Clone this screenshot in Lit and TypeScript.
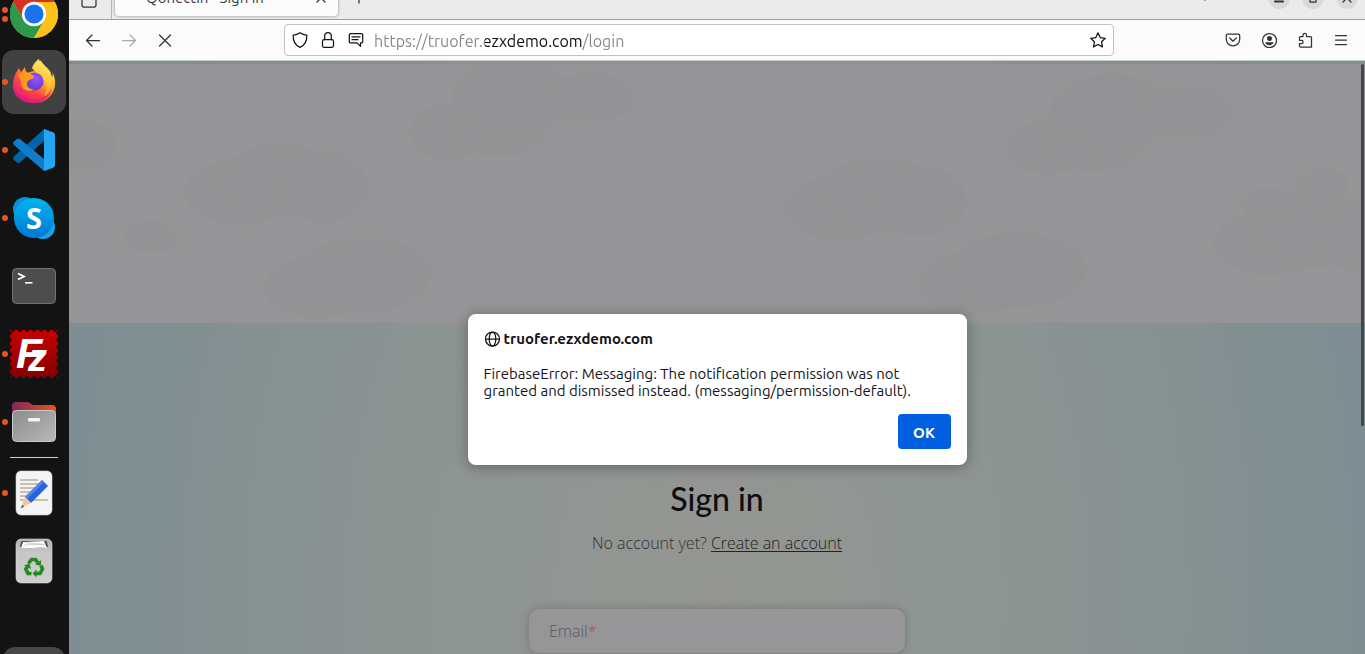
import { LitElement, html, svg, css } from "lit";
import { customElement, property } from "lit/decorators.js";

/* ---------- dock ---------- */

const chrome = html`<svg class="art" viewBox="0 0 48 48" aria-hidden="true">
  <circle cx="24" cy="24" r="24" fill="#fbc116"/>
  <path d="M24 12H44.8A24 24 0 0 0 3.2 12L13.6 30Z" fill="#d93025"/>
  <path d="M3.2 12A24 24 0 0 0 24 48L34.4 30 24 24 13.6 30Z" fill="#2d9a4b"/>
  <path d="M44.8 12A24 24 0 0 1 24 48L34.4 30A12 12 0 0 0 24 12Z" fill="#fbc116"/>
  <circle cx="24" cy="24" r="12.2" fill="#fff"/><circle cx="24" cy="24" r="9.6" fill="#1a73e8"/>
</svg>`;

const firefox = html`<svg class="art" viewBox="0 0 48 48" aria-hidden="true">
  <defs>
    <linearGradient id="ff1" x1=".85" y1=".1" x2=".2" y2=".95">
      <stop offset="0" stop-color="#fff44f"/><stop offset=".35" stop-color="#ffae27"/>
      <stop offset=".65" stop-color="#ff4a3c"/><stop offset="1" stop-color="#e31587"/>
    </linearGradient>
    <linearGradient id="ff2" x1=".7" y1="0" x2=".4" y2="1">
      <stop offset="0" stop-color="#fff36b"/><stop offset="1" stop-color="#ff9a1e"/>
    </linearGradient>
    <radialGradient id="ff3" cx=".6" cy=".3" r=".8">
      <stop offset="0" stop-color="#a24fff"/><stop offset="1" stop-color="#4b3fc4"/>
    </radialGradient>
  </defs>
  <path d="M4 20C5 15 8 12 9 10c1 2 1 3 2 4 2-2 3-4 4-5 0 3 1 5 3 6 3-2 7-2 10-1 0-5 1-9 3-12 1 4 5 6 8 10 2 2 2 4 3 7 1-1 1-3 0-5 4 6 4 14 1 20-4 8-11 11-19 11C12 45 4 39 3 29c0-3 0-6 1-9Z" fill="url(#ff1)"/>
  <path d="M22 10c1-4 4-7 7-9 1 5 6 7 9 12 6 10 3 20-3 25 2-6 2-12-1-16-3-5-9-7-12-12Z" fill="url(#ff2)"/>
  <circle cx="24.500" cy="23.500" r="9" fill="url(#ff3)"/>
  <path d="M8 18c3-4 9-5 13-2 1 1 3 1 3 3 0 2-4 2-6 4-3 4 1 9 6 8-5 4-13 1-13-6 0-3-1-5-3-7Z" fill="#ff9a1e"/>
  <path d="M5 31c4 8 13 11 21 10 7-1 13-4 16-10-2 8-10 14-18 14C14 45 7 40 5 31Z" fill="#e2177f" opacity=".65"/>
</svg>`;

const vscode = html`<svg class="art" viewBox="0 0 48 48" aria-hidden="true">
  <path d="M34 3 44 7V14L34 15 10 36.500Q8.500 37.500 7 36.500L3.500 33.500Q2.500 32 4 30.500Z" fill="#0065a9"/>
  <path d="M34 45 44 41V34L34 33 10 13Q8.500 12 7 13L3.500 16Q2.500 17.500 4 19Z" fill="#0f7dcb"/>
  <path d="M34 3 43.500 6.500Q45 7.200 45 9V39Q45 40.800 43.500 41.500L34 45Z" fill="#24a6f2"/>
</svg>`;

const skype = html`<svg class="art" viewBox="0 0 48 48" aria-hidden="true">
  <defs><linearGradient id="sk" x1="0" y1="0" x2="0" y2="1">
    <stop offset="0" stop-color="#00b7f0"/><stop offset="1" stop-color="#0078d4"/></linearGradient></defs>
  <circle cx="15" cy="15" r="12" fill="#0a8fdc"/><circle cx="33" cy="33" r="12" fill="#1aa3ec"/>
  <circle cx="24" cy="24" r="20" fill="url(#sk)"/>
  <text class="skype-letter" x="24" y="35" text-anchor="middle">S</text>
</svg>`;

const terminal = html`<svg class="art" viewBox="0 0 48 48" aria-hidden="true">
  <rect x="2.500" y="6.500" width="43" height="35" rx="4" fill="#4d4d4d" stroke="#737373"/>
  <path d="M8 11.500 14 14.500 8 17.500" fill="none" stroke="#fff" stroke-width="1.800"/>
  <path d="M15 20.800h7.500" stroke="#fff" stroke-width="1.600"/>
</svg>`;

const notches = [3, 10, 17, 24, 31, 38, 45];
const filezilla = html`<svg class="art" viewBox="0 0 48 48" aria-hidden="true">
  <defs><linearGradient id="fz" x1="0" y1="0" x2="0" y2="1">
    <stop offset="0" stop-color="#c80000"/><stop offset="1" stop-color="#860000"/></linearGradient></defs>
  <rect width="48" height="48" fill="url(#fz)"/>
  ${notches.map((n) => svg`<circle cx=${n} cy="0" r="1.900" fill="#131313"/><circle cx=${n} cy="48" r="1.900" fill="#131313"/>
    <circle cx="0" cy=${n} r="1.900" fill="#131313"/><circle cx="48" cy=${n} r="1.900" fill="#131313"/>`)}
  <text class="fz-f" x="6" y="38">F</text><text class="fz-z" x="18" y="41">z</text>
</svg>`;

const files = html`<svg class="art" viewBox="0 0 48 48" aria-hidden="true">
  <defs>
    <linearGradient id="fo" x1="0" y1="0" x2="1" y2="0"><stop offset="0" stop-color="#7c2a5c"/><stop offset="1" stop-color="#e95420"/></linearGradient>
    <linearGradient id="fg" x1="0" y1="0" x2="1" y2="1"><stop offset="0" stop-color="#8c8c8c"/><stop offset="1" stop-color="#b8b8b8"/></linearGradient>
  </defs>
  <path d="M2 8Q2 4 6 4H17Q19 4 20.500 5.500T24 7H42Q46 7 46 11V30H2Z" fill="url(#fo)"/>
  <rect x="2.500" y="12.500" width="43" height="31" rx="4" fill="url(#fg)" stroke="#c9c9c9"/>
  <rect x="18" y="20" width="12" height="3.500" rx="1.200" fill="#f4f4f4"/>
</svg>`;

const editor = html`<svg class="art" viewBox="0 0 48 48" aria-hidden="true">
  <rect x="6" y="2" width="36" height="44" rx="5" fill="#f4f4f4" stroke="#d5d5d5" stroke-width=".6"/>
  <path d="M10 11h18M10 15h20M10 19h17M10 23h13M10 27h10M10 31h28" stroke="#c3c1b2" stroke-width="2"/>
  <path d="M32 11 38 17 21 34 15 28Z" fill="#2b63dd"/><path d="M32 11 34 13 17 30 15 28Z" fill="#4f86f2"/>
  <path d="M15 28 21 34 11 39Z" fill="#f7c595"/><path d="M12.500 36 14 37.500 10.500 39.500Z" fill="#3a3a3a"/>
</svg>`;

const trash = html`<svg class="art" viewBox="0 0 48 48" aria-hidden="true">
  <defs><linearGradient id="tr" x1="0" y1="0" x2="0" y2="1">
    <stop offset="0" stop-color="#b0b0b0"/><stop offset=".3" stop-color="#c6c6c6"/><stop offset="1" stop-color="#cfcfcf"/></linearGradient></defs>
  <rect x="6" y="2" width="36" height="44" rx="5" fill="url(#tr)" stroke="#dadada" stroke-width=".6"/>
  <path d="M10 10 11 5Q11.200 4 12.500 4H35.500Q36.800 4 37 5L38 10Z" fill="#4c4c4c"/>
  <path d="M11 11 13 5 34 4 37 11 30 10 24 11Z" fill="#fff"/><path d="M14 8 32 7M15 5.500 35 8" stroke="#bbb" stroke-width=".7"/>
  <g fill="none" stroke="#26891f" stroke-width="3.600">
    <path d="M18.500 26.500 21.500 22.500H25.500L28 26"/><path d="M31 28.500 32.500 32 30 36.500H25.500"/><path d="M21.500 36.500H18L15.800 32 18 29"/>
  </g>
  <path d="M25 27.500 30.800 28.800 31.200 23Z M26.500 32.500 22.500 36.500 26.500 40.500Z M14 28.500 19.500 26.500 21 32Z" fill="#26891f"/>
</svg>`;

@customElement("app-dock")
class AppDock extends LitElement {
  static styles = css`
    :host { display: flex; flex-direction: column; justify-content: space-between; overflow: hidden; background: #131313; }
    .apps, .pinned { display: flex; flex-direction: column; gap: 4px; }
    .apps { margin-top: -18px; }
    .pinned { margin-top: 3px; }
    .item { position: relative; display: grid; place-items: center; width: 64px; height: 64px; margin: 0 2px; padding: 0; border: 0; border-radius: 12px; background: none; }
    .item.active { background: #414141; }
    .art { display: block; width: 48px; height: 48px; }
    .dots { position: absolute; left: 0; top: 0; height: 100%; display: flex; flex-direction: column; justify-content: center; gap: 3px; }
    .dot { width: 6px; height: 6px; border-radius: 50%; background: #e95420; }
    .rule { height: 1px; margin: 3px 11px 3px 10px; border: 0; background: #d0d0d0; }
    .grid { flex: none; width: 62px; height: 64px; margin: 0 3px -57px; border: 0; border-radius: 12px; background: #474747; }
    .skype-letter { font: 700 29px "Noto Sans", sans-serif; fill: #fff; }
    .fz-f { font: italic 700 43px "Liberation Sans", sans-serif; fill: #fff; }
    .fz-z { font: italic 700 38px "Liberation Sans", sans-serif; fill: #fff; }
  `;
  render() {
    const item = (name: string, art: unknown, dots: number, active = false) => html`
      <button class="item ${active ? "active" : ""}" aria-label=${name}>
        ${art}<span class="dots">${Array.from({ length: dots }, () => html`<span class="dot"></span>`)}</span>
      </button>`;
    return html`
      <div>
        <nav class="apps">
          ${item("Google Chrome", chrome, 2)}${item("Firefox", firefox, 1, true)}${item("Visual Studio Code", vscode, 1)}
          ${item("Skype", skype, 1)}${item("Terminal", terminal, 0)}${item("FileZilla", filezilla, 1)}${item("Files", files, 1)}
        </nav>
        <hr class="rule">
        <nav class="pinned">${item("Text Editor", editor, 1)}${item("Trash", trash, 0)}</nav>
      </div>
      <button class="grid" aria-label="Show applications"></button>`;
  }
}

/* ---------- browser icons, all on a 16 unit grid ---------- */

const glyph = (body: unknown) => html`<svg class="glyph" viewBox="0 0 16 16" aria-hidden="true">${body}</svg>`;
const icons = {
  view: glyph(svg`<path d="M1 1v12q0 2 2 2h10q2 0 2-2V1"/>`),
  close: glyph(svg`<path d="M4 4l8 8M12 4l-8 8"/>`),
  plus: glyph(svg`<path d="M8 3v10M3 8h10"/>`),
  caret: glyph(svg`<path d="M4 6l4 4 4-4"/>`),
  minimize: glyph(svg`<path d="M4 11.500h8" stroke-width="2"/>`),
  maximize: glyph(svg`<rect x="5" y="5" width="6" height="7"/>`),
  back: glyph(svg`<path d="M14.500 8.500H1.500M7 3 1.500 8.500 7 14"/>`),
  forward: glyph(svg`<path d="M1.500 8.500h13M9 3 14.500 8.500 9 14"/>`),
  stop: glyph(svg`<path d="M2.500 3l11 11M13.500 3l-11 11"/>`),
  shield: glyph(svg`<path d="M8 .8C6 2.300 3.700 3 1.200 3.200 1 9 3 13.200 8 15.300 13 13.200 15 9 14.800 3.200 12.300 3 10 2.300 8 .8Z"/>`),
  lock: glyph(svg`<rect x="2.500" y="7.500" width="11" height="7.800" rx="1.500"/><path d="M4.700 7.500V4a3.300 3.300 0 0 1 6.600 0v3.500"/>`),
  note: glyph(svg`<path d="M2.500 1.500h11q1.200 0 1.200 1.200v7q0 1.200-1.200 1.200h-1v3.500L9 10.900H2.500q-1.200 0-1.200-1.200v-7q0-1.200 1.200-1.200ZM4 4.800h8M4 7.500h6"/>`),
  star: glyph(svg`<path d="m8 .8 2.200 4.800 5.100.7-3.700 3.500.9 5.100L8 12.500l-4.500 2.400.9-5.100L.7 6.300l5.100-.7Z"/>`),
  pocket: glyph(svg`<path d="M2.700 2.200h10.600q1.400 0 1.400 1.400v3.600a6.700 6.700 0 0 1-13.400 0V3.600q0-1.400 1.400-1.400ZM4.700 6 8 9.200 11.300 6"/>`),
  account: glyph(svg`<circle cx="8.500" cy="8.500" r="7"/><circle cx="8.500" cy="6.500" r="2.500" class="solid"/><path class="solid" d="M4.200 10.300h8.600Q12 13.300 8.500 13.300T4.200 10.300Z"/>`),
  extension: glyph(svg`<path d="M6 4.500V3a1.700 1.700 0 0 1 3.500 0v1.500h4q1 0 1 1V15H3.500q-1 0-1-1v-2.500h2a1.500 1.500 0 0 0 0-3.200h-2V5.500q0-1 1-1Z"/>`),
  menu: glyph(svg`<path d="M2.500 3.500h11M2.500 8h11M2.500 12.500h11"/>`),
  globe: glyph(svg`<circle cx="7.500" cy="8" r="7"/><ellipse cx="7.500" cy="8" rx="3.300" ry="7"/><path d="M.5 8h14"/>`),
};

const glyphStyles = css`
  .glyph { display: block; width: 16px; height: 16px; fill: none; stroke: currentColor; stroke-width: 1.25; stroke-linejoin: round; stroke-linecap: round; }
  .solid { fill: currentColor; stroke: none; }
`;

@customElement("browser-chrome")
class BrowserChrome extends LitElement {
  static styles = [glyphStyles, css`
    :host { display: block; font-family: Ubuntu, "Noto Sans", sans-serif; color: #333337; }
    button { display: grid; place-items: center; padding: 0; border: 0; background: none; color: inherit; }
    .strip { display: flex; align-items: flex-end; height: 19px; overflow: hidden; background: #ebebeb; border-bottom: 1px solid #a0a0a2; }
    .view { flex: none; width: 43px; height: 32px; padding: 0 3px 6px 0; border-right: 1px solid #b5b5b7; }
    .tab { display: flex; flex: none; align-items: center; box-sizing: border-box; width: 223px; height: 36px; margin: 0 3px 3px; padding: 0 8px 0 31px; border-radius: 4px; background: #fcfcfc; box-shadow: 0 0 3px rgba(0, 0, 0, .45); }
    .title { flex: 1; font-size: 15px; line-height: 20px; white-space: nowrap; color: #3b3b40; }
    .tab-close { width: 18px; height: 18px; }
    .add { width: 36px; height: 36px; margin-bottom: 3px; }
    .space { flex: 1; }
    .list { width: 36px; height: 36px; margin-bottom: 3px; }
    .controls { display: flex; gap: 12px; margin: 0 7px 10px 45px; }
    .control { width: 22px; height: 22px; border-radius: 50%; background: #d9d9d9; }
    .bar { display: flex; align-items: center; height: 40px; background: #fbfbfb; border-bottom: 1px solid #c8c8c9; }
    .nav { display: flex; flex: none; width: 209px; padding-left: 6px; }
    .nav button, .tools button { width: 36px; height: 32px; }
    .off { opacity: .4; }
    .address { display: flex; flex: 1; align-items: center; box-sizing: border-box; height: 32px; padding: 0 7px 0 1px; border: 1px solid #c0c0c1; border-radius: 4px; background: #fff; color: #15141a; }
    .address button { width: 28px; height: 28px; }
    .address .fav { width: 16px; }
    .url { flex: 1; min-width: 0; padding: 2px 0 0 4px; border: 0; outline: 0; font: 16px/20px Ubuntu, "Noto Sans", sans-serif; color: transparent;
      background: linear-gradient(90deg, #85858a 115px, #0c0c0d 115px, #0c0c0d 212px, #85858a 212px) text; -webkit-background-clip: text; }
    .tools { display: flex; flex: none; margin: 0 6px 0 101px; }
  `];
  render() {
    return html`
      <div class="strip">
        <button class="view" aria-label="Firefox View">${icons.view}</button>
        <div class="tab"><span class="title">Qonectin - Sign in</span><button class="tab-close" aria-label="Close tab">${icons.close}</button></div>
        <button class="add" aria-label="New tab">${icons.plus}</button>
        <span class="space"></span>
        <button class="list" aria-label="List all tabs">${icons.caret}</button>
        <div class="controls">
          <button class="control" aria-label="Minimize">${icons.minimize}</button>
          <button class="control" aria-label="Maximize">${icons.maximize}</button>
          <button class="control" aria-label="Close">${icons.close}</button>
        </div>
      </div>
      <div class="bar">
        <div class="nav">
          <button aria-label="Back">${icons.back}</button>
          <button class="off" aria-label="Forward">${icons.forward}</button>
          <button aria-label="Stop">${icons.stop}</button>
        </div>
        <div class="address">
          <button aria-label="Tracking protection">${icons.shield}</button>
          <button aria-label="Connection secure">${icons.lock}</button>
          <button aria-label="Notification request">${icons.note}</button>
          <input class="url" aria-label="Address" value="https://truofer.ezxdemo.com/login" spellcheck="false">
          <button class="fav" aria-label="Bookmark this page">${icons.star}</button>
        </div>
        <div class="tools">
          <button aria-label="Save to Pocket">${icons.pocket}</button>
          <button aria-label="Account">${icons.account}</button>
          <button aria-label="Extensions">${icons.extension}</button>
          <button aria-label="Menu">${icons.menu}</button>
        </div>
      </div>`;
  }
}

/* ---------- page ---------- */

/* cx, cy, rx, ry of every cloud lobe */
const lobes = [
  [10, 81, 38, 25], [169, 128, 54, 33], [212, 117, 62, 37], [255, 123, 44, 35], [82, 173, 26, 16],
  [249, 223, 54, 31], [294, 211, 68, 37], [380, 68, 40, 27], [430, 62, 48, 31], [443, 32, 61, 38], [523, 33, 42, 25],
  [770, 144, 56, 32], [811, 131, 60, 37], [852, 137, 45, 35], [904, 219, 54, 32], [948, 206, 69, 37],
  [979, 83, 41, 27], [1026, 77, 49, 30], [1043, 48, 62, 38], [1121, 48, 42, 25],
  [1201, 179, 56, 32], [1250, 165, 62, 38], [1290, 172, 42, 35], [1254, 120, 26, 16], [1197, 139, 26, 16],
];

@customElement("sign-in-page")
class SignInPage extends LitElement {
  static styles = css`
    :host { display: block; min-height: 0; overflow: hidden; padding-top: 3px; color: #0e0e10;
      background: radial-gradient(ellipse 660px 1000px at 50% 540px, #949590, #919693 20%, #8c9492 48%, #869191 72%, #818f92 88%, #7f8e92); }
    .sky { height: 259px; overflow: hidden; background: #959496; }
    .clouds { display: block; width: 100%; height: 259px; fill: #939294; }
    .form { display: flex; flex-direction: column; align-items: center; padding-top: 156px; }
    .heading { margin: 0; font: 500 32px/40px Lato, sans-serif; }
    .hint { margin: 14px 0 0; font: 300 16px/20px "Open Sans", sans-serif; color: #303234; }
    .hint a { color: #202224; text-underline-offset: 2px; }
    .field { display: grid; width: 376px; max-width: 90%; margin-top: 56px; }
    .field > * { grid-area: 1 / 1; }
    .box { box-sizing: border-box; width: 100%; height: 44px; padding: 0 20px; border: 0; border-radius: 10px; background: #969597; box-shadow: 0 0 10px rgba(0, 0, 0, .22); }
    .label { align-self: center; padding-left: 20px; font: 300 16px/20px "Open Sans", sans-serif; color: #58585b; }
    .star { color: #a84a55; }
  `;
  render() {
    return html`
      <div class="sky">
        <svg class="clouds" viewBox="0 0 1296 259" preserveAspectRatio="xMidYMin slice" aria-hidden="true">
          ${lobes.map(([cx, cy, rx, ry]) => svg`<ellipse cx=${cx} cy=${cy} rx=${rx} ry=${ry}/>`)}
        </svg>
      </div>
      <form class="form">
        <h1 class="heading">Sign in</h1>
        <p class="hint">No account yet? <a href="#create">Create an account</a></p>
        <div class="field">
          <input class="box" id="email" type="email">
          <label class="label" for="email">Email<span class="star">*</span></label>
        </div>
      </form>`;
  }
}

@customElement("alert-box")
class AlertBox extends LitElement {
  @property() origin = "";
  @property() message = "";
  static styles = [glyphStyles, css`
    :host { display: block; box-sizing: border-box; width: 499px; max-width: 90%; padding: 16px; border-radius: 8px; background: #fff; color: #15141a;
      box-shadow: 0 2px 14px rgba(0, 0, 0, .32); font: 15px/17px Ubuntu, "Noto Sans", sans-serif; }
    .origin { display: flex; align-items: center; gap: 3px; margin: 0; padding-left: 1px; font-size: 15px; line-height: 17px; font-weight: 700; }
    .message { height: 34px; margin: 18px 0 0; overflow: hidden; }
    .actions { display: flex; justify-content: flex-end; margin-top: 15px; }
    .ok { width: 53px; height: 35px; padding: 2px 0 0; border: 0; border-radius: 4px; background: #0060df; color: #fff; font: 700 15px/17px Ubuntu, "Noto Sans", sans-serif; }
  `];
  render() {
    return html`
      <h2 class="origin">${icons.globe}<span>${this.origin}</span></h2>
      <p class="message">${this.message}</p>
      <div class="actions"><button class="ok">OK</button></div>`;
  }
}

@customElement("app-root")
class AppRoot extends LitElement {
  static styles = css`
    :host { display: grid; grid-template-columns: 69px minmax(0, 1fr); height: 100vh; overflow: hidden; }
    .window { display: grid; grid-template-rows: auto minmax(0, 1fr); min-height: 0; }
    .view { position: relative; display: grid; min-height: 0; }
    .scroll { position: absolute; top: 3px; right: 1px; width: 3px; height: 61%; border-radius: 2px; background: #464648; }
    .modal { position: absolute; inset: 0; display: flex; justify-content: center; align-items: flex-start; padding-top: 253px; }
  `;
  render() {
    return html`
      <app-dock></app-dock>
      <main class="window">
        <browser-chrome></browser-chrome>
        <div class="view">
          <sign-in-page></sign-in-page>
          <span class="scroll"></span>
          <div class="modal" role="alertdialog" aria-label="Message from page">
            <alert-box origin="truofer.ezxdemo.com"
              message="FirebaseError: Messaging: The notification permission was not granted and dismissed instead. (messaging/permission-default)."></alert-box>
          </div>
        </div>
      </main>`;
  }
}
